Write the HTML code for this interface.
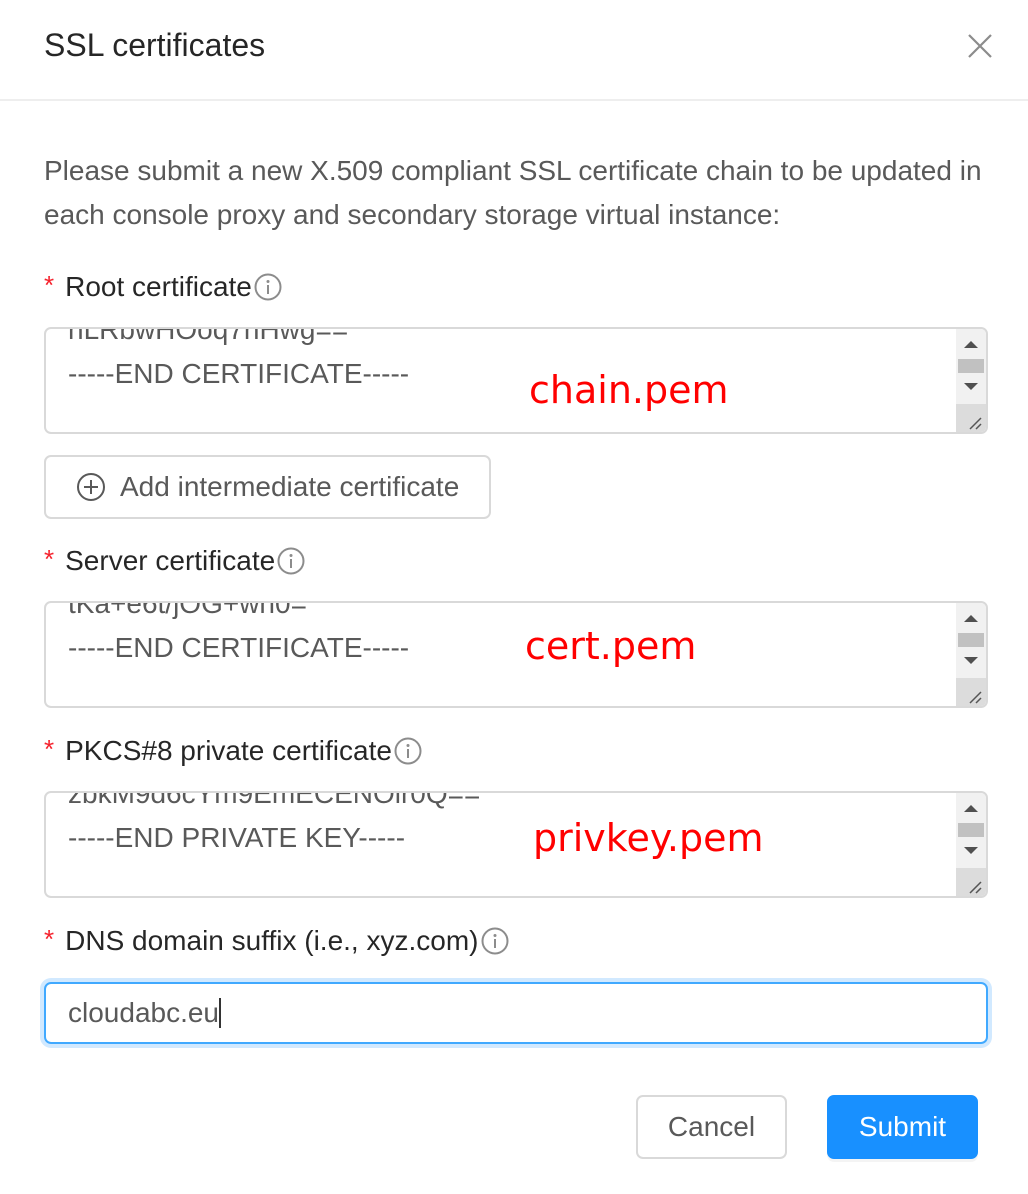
<!DOCTYPE html>
<html><head><meta charset="utf-8">
<style>
*{box-sizing:border-box;margin:0;padding:0}
body{width:1028px;height:1194px;background:#fff;position:relative;overflow:hidden;font-family:"Liberation Sans",Arial,sans-serif;color:rgba(0,0,0,0.65)}
.a{position:absolute}
.title{left:44px;top:25px;font-size:32px;color:rgba(0,0,0,0.85);line-height:40px}
.hr{left:0;top:99px;width:1028px;height:2px;background:#eee}
.p{left:44px;top:149px;font-size:28px;line-height:44px;width:975px;color:#595959}
.lbl{left:44px;font-size:28px;line-height:40px;color:rgba(0,0,0,0.85);white-space:nowrap}
.lbl .s{color:#f5222d;font-size:26px;margin-right:11px;vertical-align:2px}
.lbl svg{vertical-align:-5px;margin-left:2px}
.ta{left:44px;width:944px;height:107px;border:2px solid #d9d9d9;border-radius:7px;overflow:hidden;background:#fff}
.ta .l{position:absolute;left:22px;font-size:28px;line-height:44px;color:#595959;white-space:nowrap}
.sb{position:absolute;right:0;top:0;width:30px;height:103px;background:#f1f1f1}
.sb .up{position:absolute;left:8px;top:12px;width:0;height:0;border-left:7px solid transparent;border-right:7px solid transparent;border-bottom:7px solid #505050}
.sb .dn{position:absolute;left:8px;top:54px;width:0;height:0;border-left:7px solid transparent;border-right:7px solid transparent;border-top:7px solid #505050}
.sb .th{position:absolute;left:2px;top:30px;width:26px;height:14px;background:#c1c1c1}
.sb .rc{position:absolute;left:0;top:75px;width:30px;height:28px;background:#dcdcdc}
.red{font-family:"DejaVu Sans",sans-serif;color:#ff0000;font-size:38px;line-height:44px;white-space:nowrap}
.btn{border:2px solid #d9d9d9;border-radius:7px;background:#fff;font-size:28px;color:#595959;text-align:center}
</style></head><body>
<div class="a title">SSL certificates</div>
<svg class="a" style="left:966px;top:32px" width="28" height="28" viewBox="0 0 28 28"><path d="M3 3L25 25M25 3L3 25" stroke="#8c8c8c" stroke-width="2.2" fill="none"/></svg>
<div class="a hr"></div>
<div class="a p">Please submit a new X.509 compliant SSL certificate chain to be updated in each console proxy and secondary storage virtual instance:</div>

<div class="a lbl" style="top:265px"><span class="s">*</span>Root certificate<svg width="28" height="28" viewBox="0 0 28 28"><circle cx="14" cy="14" r="12.5" stroke="#8c8c8c" stroke-width="2" fill="none"/><circle cx="14" cy="8.5" r="1.5" fill="#8c8c8c"/><path d="M14 12v9" stroke="#8c8c8c" stroke-width="2"/></svg></div>
<div class="a ta" style="top:327px"><div class="l" style="top:-21px">nLRbwHOoq7nHwg==</div><div class="l" style="top:23px">-----END CERTIFICATE-----</div>
<div class="sb"><div class="up"></div><div class="th"></div><div class="dn"></div><div class="rc"><svg width="30" height="28" viewBox="0 0 30 28"><path d="M14 25L25 14M20 25L25 20" stroke="#555" stroke-width="1.5"/></svg></div></div></div>
<div class="a red" style="left:529px;top:368px">chain.pem</div>

<div class="a btn" style="left:44px;top:455px;width:447px;height:64px;line-height:60px;text-align:left;padding-left:30px"><svg style="vertical-align:-6px;margin-right:14px" width="30" height="30" viewBox="0 0 30 30"><circle cx="15" cy="15" r="13" stroke="#595959" stroke-width="2" fill="none"/><path d="M15 8v14M8 15h14" stroke="#595959" stroke-width="2"/></svg>Add intermediate certificate</div>

<div class="a lbl" style="top:539px"><span class="s">*</span>Server certificate<svg width="28" height="28" viewBox="0 0 28 28"><circle cx="14" cy="14" r="12.5" stroke="#8c8c8c" stroke-width="2" fill="none"/><circle cx="14" cy="8.5" r="1.5" fill="#8c8c8c"/><path d="M14 12v9" stroke="#8c8c8c" stroke-width="2"/></svg></div>
<div class="a ta" style="top:601px"><div class="l" style="top:-21px">tKa+e6t/jOG+wn0=</div><div class="l" style="top:23px">-----END CERTIFICATE-----</div>
<div class="sb"><div class="up"></div><div class="th"></div><div class="dn"></div><div class="rc"><svg width="30" height="28" viewBox="0 0 30 28"><path d="M14 25L25 14M20 25L25 20" stroke="#555" stroke-width="1.5"/></svg></div></div></div>
<div class="a red" style="left:525px;top:624px">cert.pem</div>

<div class="a lbl" style="top:729px"><span class="s">*</span>PKCS#8 private certificate<svg width="28" height="28" viewBox="0 0 28 28"><circle cx="14" cy="14" r="12.5" stroke="#8c8c8c" stroke-width="2" fill="none"/><circle cx="14" cy="8.5" r="1.5" fill="#8c8c8c"/><path d="M14 12v9" stroke="#8c8c8c" stroke-width="2"/></svg></div>
<div class="a ta" style="top:791px"><div class="l" style="top:-21px">zbkM9d6cYm9EmECENOlr0Q==</div><div class="l" style="top:23px">-----END PRIVATE KEY-----</div>
<div class="sb"><div class="up"></div><div class="th"></div><div class="dn"></div><div class="rc"><svg width="30" height="28" viewBox="0 0 30 28"><path d="M14 25L25 14M20 25L25 20" stroke="#555" stroke-width="1.5"/></svg></div></div></div>
<div class="a red" style="left:533px;top:816px">privkey.pem</div>

<div class="a lbl" style="top:919px"><span class="s">*</span>DNS domain suffix (i.e., xyz.com)<svg width="28" height="28" viewBox="0 0 28 28"><circle cx="14" cy="14" r="12.5" stroke="#8c8c8c" stroke-width="2" fill="none"/><circle cx="14" cy="8.5" r="1.5" fill="#8c8c8c"/><path d="M14 12v9" stroke="#8c8c8c" stroke-width="2"/></svg></div>
<div class="a" style="left:44px;top:982px;width:944px;height:62px;border:2px solid #40a9ff;border-radius:7px;box-shadow:0 0 0 4px rgba(24,144,255,0.2);font-size:28px;line-height:58px;padding-left:22px;color:#595959">cloudabc.eu<span style="display:inline-block;width:2px;height:30px;background:#333;vertical-align:-6px"></span></div>

<div class="a btn" style="left:636px;top:1095px;width:151px;height:64px;line-height:60px">Cancel</div>
<div class="a btn" style="left:827px;top:1095px;width:151px;height:64px;line-height:60px;background:#1890ff;border-color:#1890ff;color:#fff;box-shadow:0 3px 0 rgba(0,0,0,0.045)">Submit</div>
</body></html>
